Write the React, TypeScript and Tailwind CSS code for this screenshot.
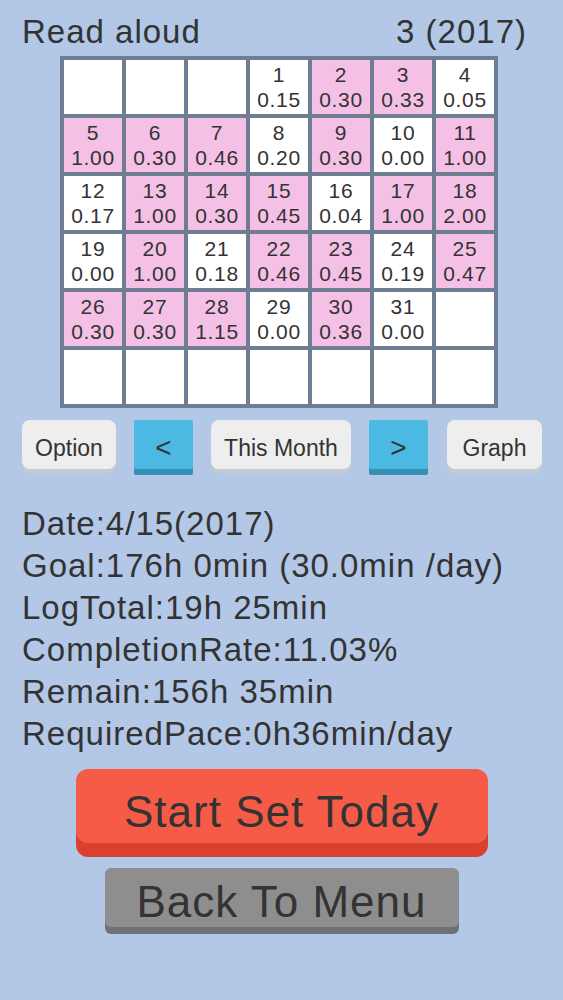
import React from 'react'

// day + logged time (h.mm); blank cells are null
const DAYS: Array<[number, string] | null> = [
  null, null, null,
  [1, '0.15'], [2, '0.30'], [3, '0.33'], [4, '0.05'],
  [5, '1.00'], [6, '0.30'], [7, '0.46'], [8, '0.20'], [9, '0.30'], [10, '0.00'], [11, '1.00'],
  [12, '0.17'], [13, '1.00'], [14, '0.30'], [15, '0.45'], [16, '0.04'], [17, '1.00'], [18, '2.00'],
  [19, '0.00'], [20, '1.00'], [21, '0.18'], [22, '0.46'], [23, '0.45'], [24, '0.19'], [25, '0.47'],
  [26, '0.30'], [27, '0.30'], [28, '1.15'], [29, '0.00'], [30, '0.36'], [31, '0.00'], null,
  null, null, null, null, null, null, null,
]

const STATS = [
  'Date:4/15(2017)',
  'Goal:176h 0min (30.0min /day)',
  'LogTotal:19h 25min',
  'CompletionRate:11.03%',
  'Remain:156h 35min',
  'RequiredPace:0h36min/day',
]

// goal is 30 min a day, anything at or above it is marked
const metGoal = (v: string) => parseFloat(v) >= 0.3

function GreyButton({ label, className }: { label: string; className: string }) {
  return (
    <div
      className={`flex h-[49px] items-center justify-center rounded-[8px] bg-[#eeeeee] pt-[7px] text-[23px] shadow-[0_4px_0_#c6cad1] ${className}`}
    >
      {label}
    </div>
  )
}

function ArrowButton({ label }: { label: string }) {
  return (
    <div className="flex h-[49px] w-[59px] items-center justify-center rounded-[2px] bg-[#4cb9e2] pt-[6px] text-[28px] shadow-[0_6px_0_#3690b3]">
      {label}
    </div>
  )
}

export default function App() {
  return (
    <div className="min-h-screen w-full bg-[#b3c7e7] font-['Liberation_Sans',Arial,sans-serif] text-[#333333]">
      {/* Title row */}
      <div className="flex justify-between pl-[22px] pr-[36px] pt-[13px] text-[33px] leading-[38px] tracking-[1px]">
        <span>Read aloud</span>
        <span>3 (2017)</span>
      </div>

      {/* Calendar */}
      <div className="ml-[60px] mt-[5px] grid w-[438px] grid-cols-7 gap-1 bg-[#6f7d93] p-1">
        {DAYS.map((d, i) => (
          <div
            key={i}
            className={`flex h-[54px] flex-col items-center justify-center text-[21px] leading-[25px] tracking-[0.7px] ${
              d && metGoal(d[1]) ? 'bg-[#f5c0e6]' : 'bg-white'
            }`}
          >
            {d && (
              <>
                <span>{d[0]}</span>
                <span>{d[1]}</span>
              </>
            )}
          </div>
        ))}
      </div>

      {/* Navigation */}
      <div className="mt-[12px] flex items-start gap-[18px] pl-[22px]">
        <GreyButton label="Option" className="w-[94px]" />
        <ArrowButton label="<" />
        <GreyButton label="This Month" className="w-[140px]" />
        <ArrowButton label=">" />
        <GreyButton label="Graph" className="ml-px w-[95px]" />
      </div>

      {/* Stats */}
      <div className="mt-[34px] pl-[22px] text-[33px] leading-[42px] tracking-[1px]">
        {STATS.map((s) => (
          <div key={s}>{s}</div>
        ))}
      </div>

      <div className="mt-[14px] flex flex-col items-center">
        <div className="flex h-[74px] w-[412px] items-center justify-center rounded-[12px] bg-[#f65b47] pt-[12px] text-[44px] tracking-[1px] shadow-[0_14px_0_#d8412f]">
          Start Set Today
        </div>
        <div className="mt-[25px] flex h-[59px] w-[354px] items-center justify-center rounded-[6px] bg-[#8e8e8e] pt-[9px] text-[44px] tracking-[1px] shadow-[0_7px_0_#707174]">
          Back To Menu
        </div>
      </div>
    </div>
  )
}
